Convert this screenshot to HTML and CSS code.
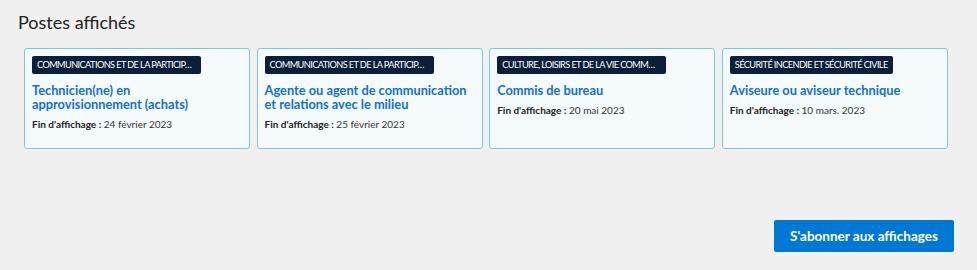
FILE: index.html
```html
<!DOCTYPE html>
<html lang="fr">
<head>
  <meta charset="UTF-8" />
  <title>Postes affichés</title>
  <link rel="stylesheet" href="styles.css">
</head>
<body>
  <section class="postes">
    <h2 class="postes-title">Postes affichés</h2>
    <div class="postes-grid">
      <div class="poste-card">
        <span class="poste-tag">Communications et de la participation citoyenne</span>
        <a class="poste-link" href="#">Technicien(ne) en approvisionnement (achats)</a>
        <p class="poste-date"><b>Fin d'affichage :</b> 24 février 2023</p>
      </div>
      <div class="poste-card">
        <span class="poste-tag">Communications et de la participation citoyenne</span>
        <a class="poste-link" href="#">Agente ou agent de communication et relations avec le milieu</a>
        <p class="poste-date"><b>Fin d'affichage :</b> 25 février 2023</p>
      </div>
      <div class="poste-card">
        <span class="poste-tag">Culture, loisirs et de la vie communautaire</span>
        <a class="poste-link" href="#">Commis de bureau</a>
        <p class="poste-date"><b>Fin d'affichage :</b> 20 mai 2023</p>
      </div>
      <div class="poste-card">
        <span class="poste-tag">Sécurité incendie et sécurité civile</span>
        <a class="poste-link" href="#">Aviseure ou aviseur technique</a>
        <p class="poste-date"><b>Fin d'affichage :</b> 10 mars. 2023</p>
      </div>
    </div>
    <div class="postes-actions">
      <button class="btn-subscribe">S'abonner aux affichages</button>
    </div>
  </section>
</body>
</html>
```

FILE: styles.css
```css
/* Base */
body {
  margin: 0;
  background-color: #f0f0f0;
  font-family: Lato, "Open Sans", Arial, sans-serif;
  color: #222;
}
.postes {
  padding: 11px 30px 0 18px;
}
.postes-title {
  margin: 0 0 15px;
  font-size: 18px;
  font-weight: 400;
  color: #222;
  line-height: 22px;
}

/* Cards */
.postes-grid {
  display: grid;
  grid-template-columns: repeat(4, 226px);
  gap: 6.6px;
  margin-left: 6px;
}
.poste-card {
  height: 101px;
  box-sizing: border-box;
  background-color: #f5fafd;
  border: 1px solid #7cc7e6;
  border-radius: 3px;
  padding: 7px 7px 0;
}
.poste-tag {
  display: inline-block;
  max-width: 169px;
  box-sizing: border-box;
  background-color: #0b1f3b;
  color: #fff;
  font-size: 9.2px;
  line-height: 18px;
  padding: 0 5px;
  border-radius: 2px;
  text-transform: uppercase;
  white-space: nowrap;
  overflow: hidden;
  text-overflow: ellipsis;
  vertical-align: top;
  letter-spacing: -0.6px;
}
.poste-link {
  display: block;
  margin-top: 8px;
  color: #1170cf;
  font-size: 12.8px;
  font-weight: 700;
  line-height: 14px;
  text-decoration: none;
}
.poste-date {
  margin: 7px 0 0;
  font-size: 10px;
  color: #333;
}
.poste-date b {
  font-weight: 700;
  color: #222;
}

/* Subscribe button */
.postes-actions {
  display: flex;
  justify-content: flex-end;
  margin-top: 71px;
}
.btn-subscribe {
  width: 180px;
  height: 32px;
  margin-right: -7px;
  background-color: #0078d4;
  color: #fff;
  border: none;
  border-radius: 2px;
  font-family: inherit;
  font-size: 13.5px;
  font-weight: 700;
  cursor: pointer;
}
```
